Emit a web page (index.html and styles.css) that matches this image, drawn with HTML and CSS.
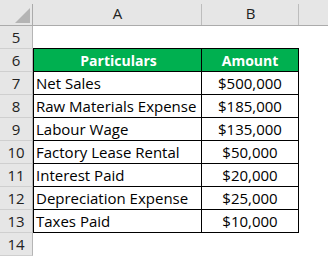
FILE: index.html
```html
<!DOCTYPE html>
<html>
<head>
<meta charset="utf-8">
<link rel="stylesheet" href="styles.css">
</head>
<body>
<div class="sheet">
  <div class="row head">
    <div class="corner"><svg width="15" height="15" viewBox="0 0 15 15"><polygon points="0,15 15,0 15,15" fill="#b4b4b4"/></svg></div>
    <div class="colhead">A</div>
    <div class="colhead">B</div>
    <div class="colhead last"></div>
  </div>
  <div class="row">
    <div class="rn">5</div>
    <div class="cell a above"></div>
    <div class="cell b above"></div>
    <div class="cell c"></div>
  </div>
  <div class="row">
    <div class="rn">6</div>
    <div class="cell a tbl hd">Particulars</div>
    <div class="cell b tbl hd">Amount</div>
    <div class="cell c"></div>
  </div>
  <div class="row">
    <div class="rn">7</div>
    <div class="cell a tbl">Net Sales</div>
    <div class="cell b tbl">$500,000</div>
    <div class="cell c"></div>
  </div>
  <div class="row">
    <div class="rn">8</div>
    <div class="cell a tbl">Raw Materials Expense</div>
    <div class="cell b tbl">$185,000</div>
    <div class="cell c"></div>
  </div>
  <div class="row">
    <div class="rn">9</div>
    <div class="cell a tbl">Labour Wage</div>
    <div class="cell b tbl">$135,000</div>
    <div class="cell c"></div>
  </div>
  <div class="row">
    <div class="rn">10</div>
    <div class="cell a tbl">Factory Lease Rental</div>
    <div class="cell b tbl">$50,000</div>
    <div class="cell c"></div>
  </div>
  <div class="row">
    <div class="rn">11</div>
    <div class="cell a tbl">Interest Paid</div>
    <div class="cell b tbl">$20,000</div>
    <div class="cell c"></div>
  </div>
  <div class="row">
    <div class="rn">12</div>
    <div class="cell a tbl">Depreciation Expense</div>
    <div class="cell b tbl">$25,000</div>
    <div class="cell c"></div>
  </div>
  <div class="row">
    <div class="rn">13</div>
    <div class="cell a tbl">Taxes Paid</div>
    <div class="cell b tbl">$10,000</div>
    <div class="cell c"></div>
  </div>
  <div class="row">
    <div class="rn">14</div>
    <div class="cell a"></div>
    <div class="cell b"></div>
    <div class="cell c"></div>
  </div>
</div>
</body>
</html>
```

FILE: styles.css
```css
html, body {
  margin: 0;
  padding: 0;
  background: #ffffff;
}

.sheet {
  width: 328px;
  height: 256px;
  overflow: hidden;
  font-family: "Open Sans", "Liberation Sans", sans-serif;
  font-size: 15px;
  color: #000000;
}

.row {
  display: grid;
  grid-template-columns: 33px 169px 97px 1fr;
  height: 23px;
}

.row.head {
  height: 26px;
}

.corner {
  box-sizing: border-box;
  background: linear-gradient(#ababab, #ababab) right 4px / 1px calc(100% - 4px) no-repeat, #e6e6e6;
  border-bottom: 1px solid #ababab;
  display: flex;
  justify-content: flex-end;
  align-items: flex-end;
  padding: 0 3px 2px 0;
}

.colhead {
  box-sizing: border-box;
  background: linear-gradient(#bdbdbd, #bdbdbd) right 4px / 1px calc(100% - 4px) no-repeat, #e6e6e6;
  border-bottom: 1px solid #ababab;
  text-align: center;
  line-height: 24px;
  padding-top: 1px;
  color: #222222;
}

.colhead.last {
  background: #e6e6e6;
}

.rn {
  box-sizing: border-box;
  background: #e6e6e6;
  border-right: 1px solid #b5b5b5;
  border-bottom: 1px solid #cfcfcf;
  text-align: center;
  line-height: 21px;
  padding-top: 1px;
  color: #222222;
}

.cell {
  box-sizing: border-box;
  line-height: 21px;
  padding-top: 1px;
  white-space: nowrap;
  overflow: hidden;
}

.cell.a {
  padding-left: 3px;
}

.cell.above {
  border-bottom: 1px solid #000000;
}

.cell.tbl {
  border-bottom: 1px solid #000000;
  border-right: 1px solid #000000;
}

.cell.a.tbl {
  border-left: 1px solid #000000;
  padding-left: 2px;
}

.cell.b {
  text-align: center;
}

.cell.hd {
  background: #00b050;
  color: #ffffff;
  font-size: 14px;
  font-weight: 700;
  text-align: center;
}
```
